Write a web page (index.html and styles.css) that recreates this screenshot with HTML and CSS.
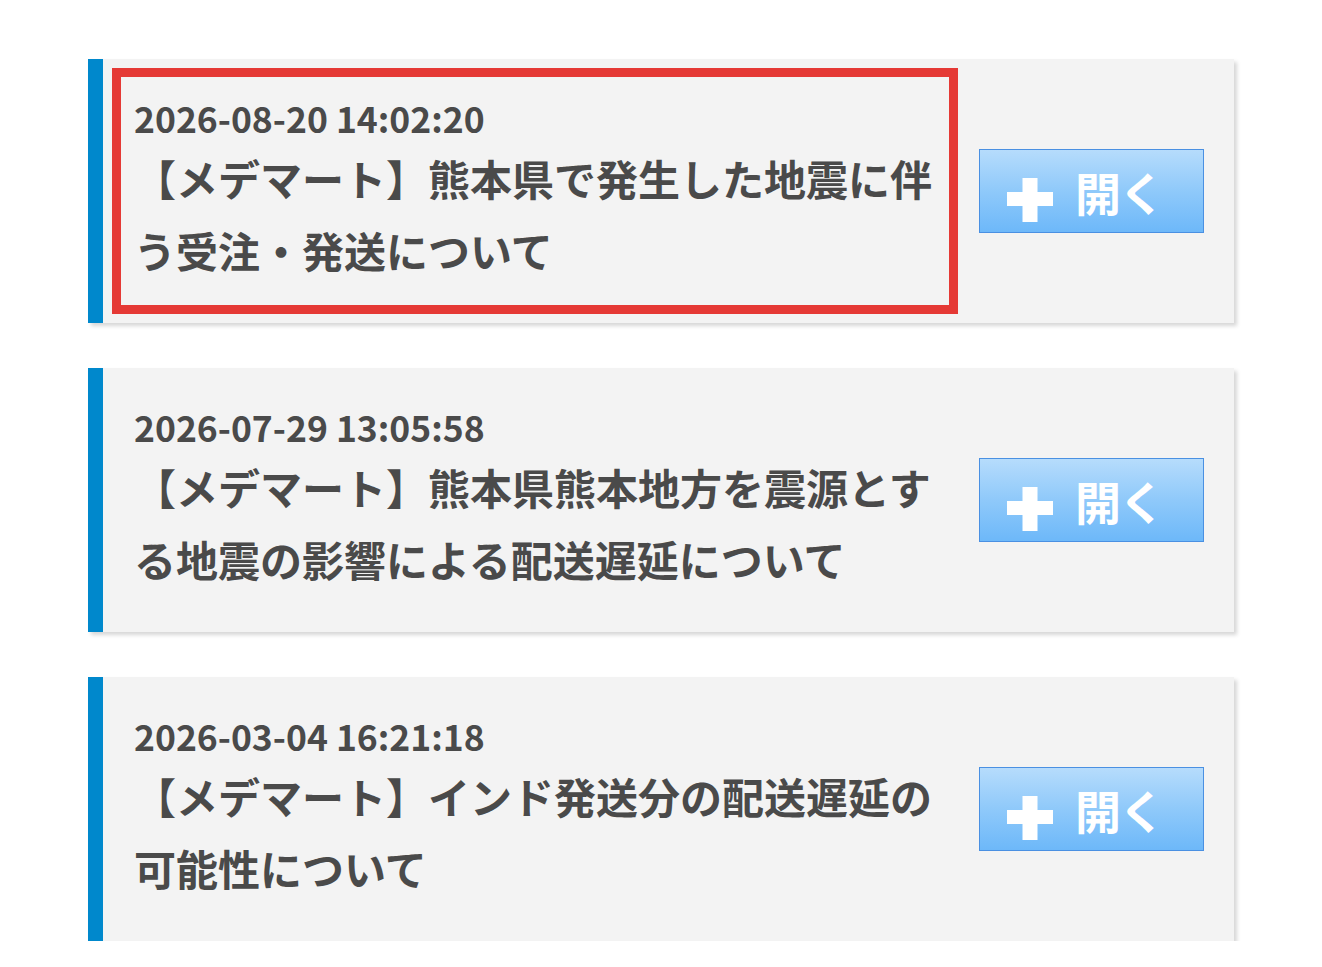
FILE: index.html
```html
<!DOCTYPE html>
<html lang="ja">
<head>
<meta charset="utf-8">
<title>お知らせ</title>
<link rel="stylesheet" href="styles.css">
</head>
<body>
<div class="list">
  <div class="card">
    <div class="info info--highlight">
      <div class="date">2026-08-20 14:02:20</div>
      <div class="title">【メデマート】熊本県で発生した地震に伴う受注・発送について</div>
    </div>
    <button class="open-btn" type="button">
      <svg class="plus" width="46" height="44" viewBox="0 0 46 44"><path d="M15.5 0h15v14h15.5v14h-15.5v16h-15v-16h-15.5v-14h15.5z" fill="#fff"/></svg>
      <span class="btn-label">開く</span>
    </button>
  </div>
  <div class="card">
    <div class="info">
      <div class="date">2026-07-29 13:05:58</div>
      <div class="title">【メデマート】熊本県熊本地方を震源とする地震の影響による配送遅延について</div>
    </div>
    <button class="open-btn" type="button">
      <svg class="plus" width="46" height="44" viewBox="0 0 46 44"><path d="M15.5 0h15v14h15.5v14h-15.5v16h-15v-16h-15.5v-14h15.5z" fill="#fff"/></svg>
      <span class="btn-label">開く</span>
    </button>
  </div>
  <div class="card">
    <div class="info">
      <div class="date">2026-03-04 16:21:18</div>
      <div class="title">【メデマート】インド発送分の配送遅延の可能性について</div>
    </div>
    <button class="open-btn" type="button">
      <svg class="plus" width="46" height="44" viewBox="0 0 46 44"><path d="M15.5 0h15v14h15.5v14h-15.5v16h-15v-16h-15.5v-14h15.5z" fill="#fff"/></svg>
      <span class="btn-label">開く</span>
    </button>
  </div>
</div>
</body>
</html>
```

FILE: styles.css
```css
html, body {
  margin: 0;
  padding: 0;
  background: #ffffff;
}

body {
  font-family: "Noto Sans CJK JP", "Noto Sans", sans-serif;
  color: #4a4a4a;
}

.list {
  display: flex;
  flex-direction: column;
  gap: 45px;
  padding: 59px 0 0 88px;
}

.card {
  box-sizing: border-box;
  width: 1146px;
  height: 264px;
  display: flex;
  align-items: center;
  background: #f3f3f3;
  border-left: 15px solid #0088cc;
  padding: 0 0 0 9px;
  box-shadow: 3px 3px 4px rgba(0, 0, 0, 0.16);
}

.info {
  box-sizing: border-box;
  width: 846px;
  height: 246px;
  border: 9px solid transparent;
  padding: 19px 0 0 13px;
}

.info--highlight {
  border-color: #e53935;
}

.date {
  font-size: 35.5px;
  font-weight: 700;
  line-height: 44px;
  white-space: nowrap;
}

.title {
  margin-top: 2px;
  font-size: 42px;
  font-weight: 700;
  line-height: 72px;
}

.open-btn {
  box-sizing: border-box;
  margin-left: 21px;
  width: 225px;
  height: 84px;
  display: flex;
  align-items: center;
  padding: 0 0 0 27px;
  border: 1px solid #4a90e2;
  border-radius: 0;
  background: linear-gradient(to bottom, #b6dcfc 0%, #8fc9fa 50%, #6db8f9 100%);
  color: #ffffff;
  font-family: "Noto Sans CJK JP", sans-serif;
  cursor: pointer;
}

.plus {
  display: block;
  flex: none;
  margin-top: 18px;
}

.btn-label {
  margin-left: 22px;
  font-size: 46px;
  font-weight: 700;
  line-height: 1;
  letter-spacing: -2px;
}
```
